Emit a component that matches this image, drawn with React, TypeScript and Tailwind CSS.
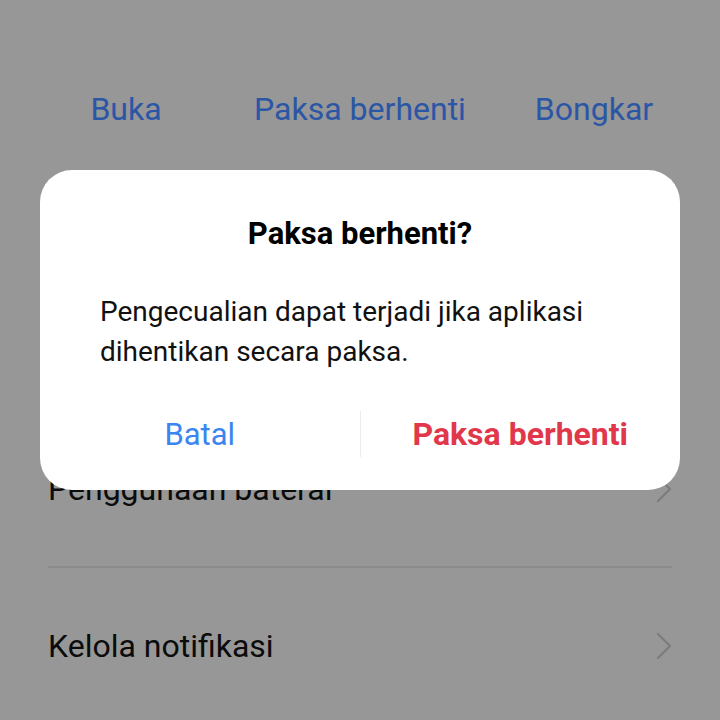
import React from 'react'

function Chevron() {
  return (
    <svg width="18" height="28" viewBox="0 0 18 28" fill="none" className="shrink-0">
      <polyline points="4,2 16,14 4,26" stroke="#7c7c7c" strokeWidth="2.2" strokeLinecap="round" strokeLinejoin="round" />
    </svg>
  )
}

function Row({ label }: { label: string }) {
  return (
    <div className="h-[155px] flex items-center justify-between">
      <span className="text-[32px] text-[#0b0b0b] leading-none">{label}</span>
      <Chevron />
    </div>
  )
}

export default function App() {
  return (
    <div
      className="relative w-[720px] h-[720px] overflow-hidden bg-[#979797]"
      style={{ fontFamily: 'Roboto, "Noto Sans", sans-serif' }}
    >
      {/* Action buttons */}
      <div className="h-[254px] pt-[69px]">
        <div className="grid grid-cols-3 px-[9px] h-20 items-center text-center text-[32px] text-[#2b56a6]">
          <span>Buka</span>
          <span>Paksa berhenti</span>
          <span>Bongkar</span>
        </div>
      </div>

      {/* Settings list (first row sits behind the dialog) */}
      <div className="mx-12">
        <div className="h-[155px]" />
        <div className="h-[2px] bg-[#8b8b8b]" />
        <Row label="Penggunaan baterai" />
        <div className="h-[2px] bg-[#8b8b8b]" />
        <Row label="Kelola notifikasi" />
      </div>

      {/* Dialog */}
      <div className="absolute left-10 top-[170px] w-[640px] h-[320px] bg-white rounded-[32px] flex flex-col">
        <h2 className="pt-[44px] h-[84px] text-center text-[31px] font-bold text-black leading-[40px]">
          Paksa berhenti?
        </h2>
        <p className="mt-[38px] px-[60px] text-[28px] text-[#111] leading-[40px]">
          Pengecualian dapat terjadi jika aplikasi dihentikan secara paksa.
        </p>
        <div className="mt-auto mb-[26px] h-[60px] flex items-center">
          <button className="flex-1 text-[31px] text-[#3a85f0] leading-none">Batal</button>
          <div className="w-px h-[46px] bg-[#ececec]" />
          <button className="flex-1 text-[32px] font-bold text-[#e1374b] leading-none">Paksa berhenti</button>
        </div>
      </div>
    </div>
  )
}
